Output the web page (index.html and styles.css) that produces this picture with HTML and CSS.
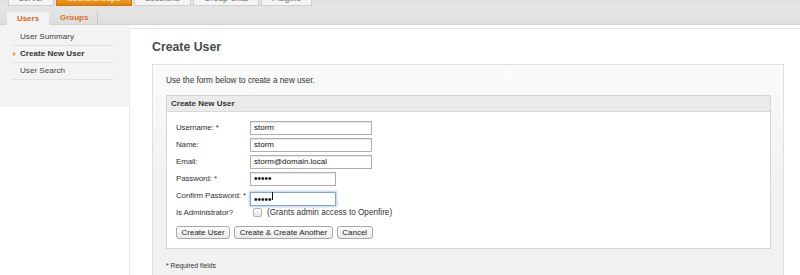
FILE: index.html
```html
<!DOCTYPE html>
<html>
<head>
<meta charset="utf-8">
<title>Create User</title>
<link rel="stylesheet" href="styles.css">
</head>
<body>
<div class="topnav">
  <div class="ttab w1"><span>Server</span></div>
  <div class="ttab w2 on"><span>Users/Groups</span></div>
  <div class="ttab w3"><span>Sessions</span></div>
  <div class="ttab w4"><span>Group Chat</span></div>
  <div class="ttab w5"><span>Plugins</span></div>
</div>
<div class="subnav">
  <div class="stab active">Users</div>
  <div class="stab">Groups</div>
</div>
<div class="layout">
  <div class="sidebar">
    <ul class="sidelist">
      <li>User Summary</li>
      <li class="current">Create New User</li>
      <li>User Search</li>
    </ul>
  </div>
  <div class="main">
    <h1 class="title">Create User</h1>
    <div class="outer">
      <p class="intro">Use the form below to create a new user.</p>
      <div class="panel">
        <div class="panel-head">Create New User</div>
        <div class="panel-body">
          <div class="form">
            <label>Username: *</label><input class="txt" type="text" value="storm">
            <label>Name:</label><input class="txt" type="text" value="storm">
            <label>Email:</label><input class="txt" type="text" value="storm@domain.local">
            <label>Password: *</label><input class="pw" type="text" value="•••••">
            <label>Confirm Password: *</label><span class="caretwrap"><input class="pw focus" type="text" value="•••••"><span class="caret"></span></span>
            <label>Is Administrator?</label><span class="admin"><span class="cb"></span>(Grants admin access to Openfire)</span>
          </div>
          <div class="buttons">
            <button class="btn">Create User</button>
            <button class="btn">Create &amp; Create Another</button>
            <button class="btn">Cancel</button>
          </div>
        </div>
      </div>
      <p class="req">* Required fields</p>
    </div>
  </div>
</div>
</body>
</html>
```

FILE: styles.css
```css
html, body {
  margin: 0;
  padding: 0;
  background: #ffffff;
  font-family: "Liberation Sans", Arial, sans-serif;
  color: #333333;
  overflow: hidden;
}

.topnav {
  display: flex;
  gap: 2px;
  height: 6px;
  padding-left: 8px;
  background: #e2e2e2;
  overflow: hidden;
}
.ttab {
  height: 5px;
  overflow: hidden;
  background: #f4f4f4;
  border: 1px solid #cfcfcf;
  border-top: none;
  box-sizing: content-box;
  font-size: 8px;
  color: #8a8a8a;
  text-align: center;
}
.ttab span {
  display: block;
  margin-top: -6px;
  line-height: 9px;
  font-weight: bold;
}
.ttab.on {
  background: linear-gradient(#f09a22, #e0800a);
  border-color: #cf7a0c;
  color: #fde3c0;
}
.w1 { width: 44px; }
.w2 { width: 74px; }
.w3 { width: 55px; }
.w4 { width: 64px; }
.w5 { width: 49px; }

.subnav {
  display: flex;
  align-items: flex-end;
  height: 19px;
  padding-left: 7px;
  background: linear-gradient(#e6e6e6, #dedede);
  border-bottom: 1px solid #d2d2d2;
  box-sizing: border-box;
}
.stab {
  height: 12px;
  line-height: 12px;
  font-size: 8px;
  font-weight: bold;
  color: #d8731a;
  padding: 0 9px 0 11px;
  border-right: 1px solid #c6c6c6;
}
.stab.active {
  width: 42px;
  padding: 0;
  box-sizing: border-box;
  text-align: center;
  background: #f3f3f3;
  border-right: none;
  height: 13px;
  margin-bottom: -1px;
  line-height: 13px;
  color: #d8661a;
}

.layout {
  display: flex;
  align-items: flex-start;
}
.sidebar {
  width: 129px;
  flex: none;
  height: 82px;
  background: #f3f3f3;
  padding-top: 4px;
  box-sizing: border-box;
}
.sidelist {
  list-style: none;
  margin: 0 0 0 13px;
  padding: 0;
  width: 100px;
}
.sidelist li {
  height: 16px;
  line-height: 16px;
  font-size: 8.1px;
  color: #444;
  padding-left: 7px;
  border-bottom: 1px solid #e2e2e2;
  position: relative;
}
.sidelist li.current {
  font-weight: bold;
  color: #333;
}
.sidelist li.current::before {
  content: "";
  position: absolute;
  left: 0;
  top: 6px;
  border-left: 3px solid #e8a020;
  border-top: 2.5px solid transparent;
  border-bottom: 2.5px solid transparent;
}

.main {
  flex: 1;
  margin-top: 3px;
  background: #ffffff;
  border-top: 1px solid #e6e6e6;
  border-left: 1px solid #e9e9e9;
  padding: 11px 16px 0 22px;
  min-height: 260px;
}
.title {
  margin: 0 0 9px 0;
  font-size: 12.3px;
  line-height: 15px;
  font-weight: bold;
  color: #4a4a4a;
}
.outer {
  border: 1px solid #e0e0e0;
  background: linear-gradient(#fbfbfb, #f1f1f1 60%);
  padding: 11px 12px 0 13px;
  height: 200px;
}
.intro {
  margin: 0 0 9px 0;
  font-size: 8.2px;
  line-height: 10px;
  color: #333;
}
.panel {
  border: 1px solid #d6d6d6;
  background: #ffffff;
}
.panel-head {
  height: 15px;
  line-height: 15px;
  background: #ebebeb;
  border-bottom: 1px solid #d8d8d8;
  padding-left: 4px;
  font-size: 8px;
  font-weight: bold;
  color: #333;
}
.panel-body {
  padding: 7px 9px 9px 9px;
}
.form {
  display: grid;
  grid-template-columns: 74px auto;
  grid-auto-rows: 17px;
  align-items: center;
  justify-items: start;
}
.form label {
  font-size: 7.9px;
  letter-spacing: -0.1px;
  color: #333;
  white-space: nowrap;
}
.form input {
  height: 14px;
  box-sizing: border-box;
  border: 1px solid #b0b0b0;
  box-shadow: inset 0 1px 1px #e4e4e4;
  font-family: "Liberation Sans", Arial, sans-serif;
  font-size: 8px;
  color: #111;
  padding: 0 3px;
  margin: 0;
  outline: none;
  background: #fff;
}
.form input.txt { width: 122px; }
.form input.pw { width: 86px; font-size: 10px; letter-spacing: 0; }
.form input.focus {
  border-color: #7fa8d8;
  box-shadow: 0 0 2px 1px #b4cff0;
}
.caretwrap {
  position: relative;
  display: inline-block;
  height: 14px;
}
.caret {
  position: absolute;
  left: 22px;
  top: 3px;
  width: 1px;
  height: 8px;
  background: #111;
}
.admin {
  display: flex;
  align-items: center;
  font-size: 8.2px;
  color: #333;
  padding-left: 3px;
}
.cb {
  width: 7px;
  height: 7px;
  border: 1px solid #b5b5b5;
  border-radius: 2px;
  background: linear-gradient(#ffffff, #e6e6e6);
  margin-right: 5px;
}
.buttons {
  display: flex;
  gap: 4px;
  margin-top: 5px;
}
.btn {
  height: 13px;
  padding: 0 4.5px;
  margin: 0;
  border: 1px solid #a8a8a8;
  border-radius: 3px;
  background: linear-gradient(#ffffff, #e9e9e9);
  font-family: "Liberation Sans", Arial, sans-serif;
  font-size: 8px;
  line-height: 11px;
  color: #222;
}
.req {
  margin: 13px 0 0 0;
  font-size: 6.8px;
  line-height: 8px;
  color: #333;
}
```
